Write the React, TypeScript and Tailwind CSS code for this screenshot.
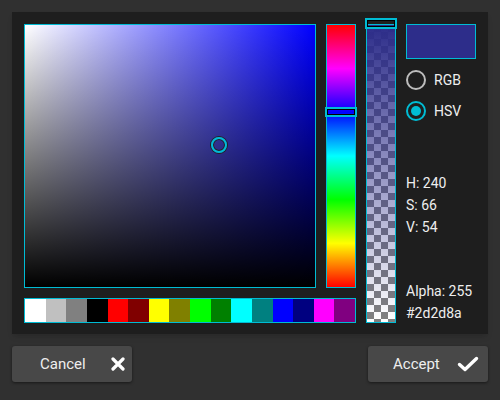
const swatches = [
  '#ffffff',
  '#c0c0c0',
  '#808080',
  '#000000',
  '#ff0000',
  '#800000',
  '#ffff00',
  '#808000',
  '#00ff00',
  '#008000',
  '#00ffff',
  '#008080',
  '#0000ff',
  '#000080',
  '#ff00ff',
  '#800080'
]

const IconClose = () => (
  <svg width="14" height="14" viewBox="0 0 14 14">
    <path d="M2 2L12 12M12 2L2 12" stroke="#fff" strokeWidth="3.2" strokeLinecap="round" />
  </svg>
)

const IconCheck = () => (
  <svg width="22" height="16" viewBox="0 0 22 16">
    <path
      d="M2.5 8.5L8 13.5L19.5 2.5"
      fill="none"
      stroke="#fff"
      strokeWidth="3.4"
      strokeLinecap="round"
      strokeLinejoin="round"
    />
  </svg>
)

const Radio = ({ label, checked }: { label: string; checked?: boolean }) => (
  <div className="flex items-center gap-[8px] h-[20px]">
    <div
      className={`w-[20px] h-[20px] rounded-full border-2 flex items-center justify-center ${
        checked ? 'border-[#00bcd4]' : 'border-[#bdbdbd]'
      }`}>
      {checked && <div className="w-[10px] h-[10px] rounded-full bg-[#00bcd4]" />}
    </div>
    <span className="text-[14px] text-[#eeeeee]">{label}</span>
  </div>
)

const App = () => {
  return (
    <div className="w-[500px] h-[400px] bg-[#303030] p-3 font-['Roboto',sans-serif]">
      <div className="flex h-[322px] bg-[#1e1e1e] px-3 pt-3 shadow-md">
        <div className="flex flex-col w-[332px]">
          <div className="flex gap-[10px] h-[264px]">
            <div className="relative w-[292px] h-[264px] border border-[#00bcd4] bg-[linear-gradient(to_bottom,transparent,#000),linear-gradient(to_right,#fff,#00f)]">
              <div className="absolute left-[186px] top-[112px] w-[16px] h-[16px] rounded-full border-2 border-[#00bcd4] shadow-[0_0_0_1px_#222,inset_0_0_0_1px_#222]" />
            </div>
            <div className="relative w-[30px] h-[264px] border border-[#00bcd4] bg-[linear-gradient(to_bottom,#f00,#f0f,#00f,#0ff,#0f0,#ff0,#f00)]">
              <div className="absolute left-[-2px] right-[-2px] top-[82px] h-[10px] border-2 border-[#00bcd4] shadow-[inset_0_0_0_1px_#000]" />
            </div>
          </div>
          <div className="flex mt-[10px] h-[25px] border border-[#00bcd4]">
            {swatches.map((c) => (
              <div key={c} className="flex-1" style={{ backgroundColor: c }} />
            ))}
          </div>
        </div>

        <div className="relative ml-[10px] w-[30px] h-[299px] border border-[#00bcd4] bg-[conic-gradient(#808080_25%,#ffffff_0_50%,#808080_0_75%,#ffffff_0)] bg-[length:14px_14px]">
          <div className="absolute inset-0 bg-linear-to-b from-[#2d2d8a] to-[#2d2d8a00]" />
          <div className="absolute left-[-2px] right-[-2px] top-[-7px] h-[11px] border-2 border-[#00bcd4] shadow-[inset_0_0_0_1px_#000]" />
        </div>

        <div className="flex flex-col ml-[10px] w-[70px] text-[14px] text-[#eeeeee] leading-[22px]">
          <div className="h-[35px] border border-[#00bcd4] bg-[#2d2d8a]" />
          <div className="mt-[11px]">
            <Radio label="RGB" />
          </div>
          <div className="mt-[11px]">
            <Radio label="HSV" checked />
          </div>
          <div className="mt-[51px]">H: 240</div>
          <div>S: 66</div>
          <div>V: 54</div>
          <div className="mt-[42px]">Alpha: 255</div>
          <div>#2d2d8a</div>
        </div>
      </div>

      <div className="flex justify-between mt-3">
        <button className="flex items-center justify-between w-[120px] h-[36px] pl-[28px] pr-[7px] rounded-[3px] bg-[#484848] text-[15px] text-[#eeeeee] shadow-[0_1px_3px_rgba(0,0,0,0.5)]">
          <span>Cancel</span>
          <IconClose />
        </button>
        <button className="flex items-center justify-between w-[120px] h-[36px] pl-[25px] pr-[9px] rounded-[3px] bg-[#484848] text-[15px] text-[#eeeeee] shadow-[0_1px_3px_rgba(0,0,0,0.5)]">
          <span>Accept</span>
          <IconCheck />
        </button>
      </div>
    </div>
  )
}

export default App
